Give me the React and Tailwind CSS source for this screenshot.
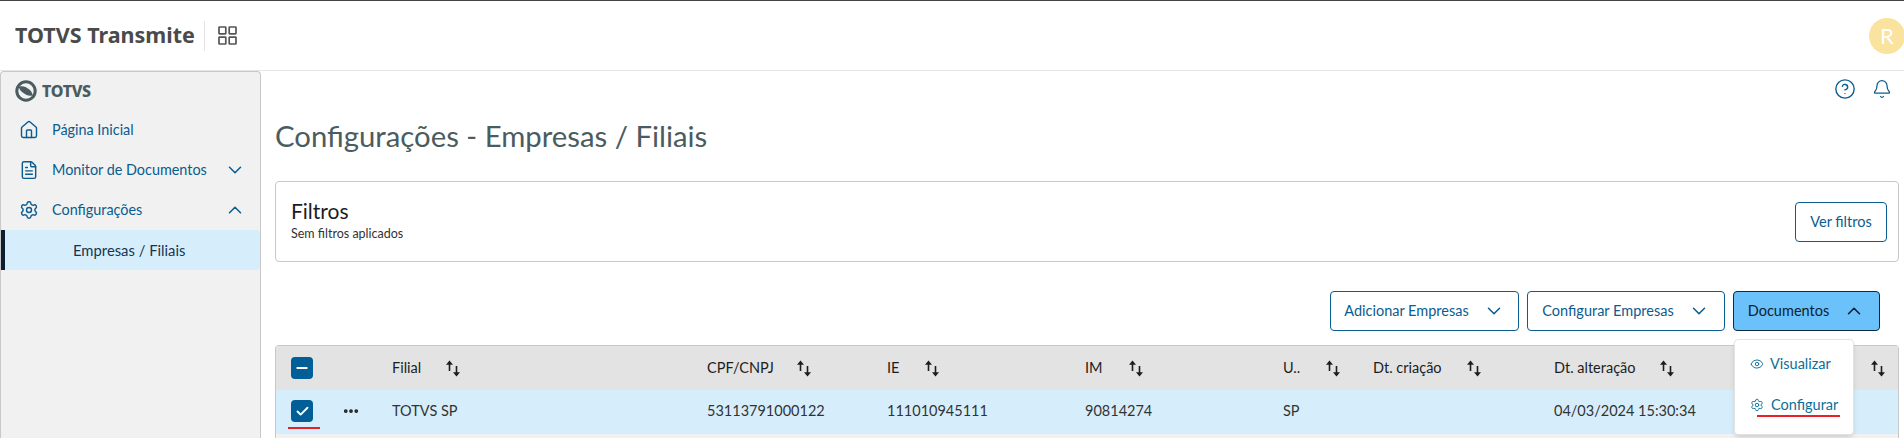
import React from "react";
import {
  Bell,
  Check,
  ChevronDown,
  ChevronUp,
  CircleHelp,
  Ellipsis,
  Eye,
  FileText,
  House,
  Minus,
  Settings,
} from "lucide-react";

const SortIcon = () => (
  <svg width="16" height="17" viewBox="0 0 16 17" fill="none" className="shrink-0">
    <path d="M4.5 11V3" stroke="#1d1d1d" strokeWidth="1.6" />
    <path d="M4.5 0.5 8 4.7H1Z" fill="#1d1d1d" />
    <path d="M11.5 6v8" stroke="#1d1d1d" strokeWidth="1.6" />
    <path d="M11.5 16.5 8 12.3h7Z" fill="#1d1d1d" />
  </svg>
);

const GridIcon = () => (
  <svg width="19" height="19" viewBox="0 0 19 19" fill="none" stroke="#555555" strokeWidth="1.7" className="shrink-0">
    <rect x="1" y="1" width="6.8" height="6.8" rx="0.6" />
    <rect x="11.2" y="1" width="6.8" height="6.8" rx="0.6" />
    <rect x="1" y="11.2" width="6.8" height="6.8" rx="0.6" />
    <rect x="11.2" y="11.2" width="6.8" height="6.8" rx="0.6" />
  </svg>
);

const TotvsLogo = () => (
  <svg width="22" height="22" viewBox="0 0 22 22" className="shrink-0">
    <circle cx="11" cy="11" r="9.2" fill="none" stroke="#4a5c60" strokeWidth="3" />
    <path d="M3.5 6.5 Q8 5.8 11 7.2 L15 10 Q17 12 18 15.5 Q14 16 11 14.8 L7 12 Q4.5 10 3.5 6.5Z" fill="#4a5c60" />
  </svg>
);

const SideItem = ({ icon: Icon, label, chevron: Chevron }) => (
  <div className="h-10 flex items-center pl-[18px] pr-[14px] text-[#0b5c8f]">
    <Icon size={20} strokeWidth={1.7} className="shrink-0" />
    <span className="ml-[13px] text-[14.4px]">{label}</span>
    {Chevron && <Chevron size={22} strokeWidth={1.7} className="ml-auto" />}
  </div>
);

const DropButton = ({ label, width, open }) => (
  <button
    className={`h-[40px] ${width} flex items-center justify-center gap-[14px] rounded-[4px] border text-[14.5px] ${
      open
        ? "bg-[#6bc1f9] border-[#0b2a42] text-[#0b1f33]"
        : "bg-white border-[#0b5c8f] text-[#0b5c8f]"
    }`}
  >
    {label}
    {open ? <ChevronUp size={22} strokeWidth={1.7} /> : <ChevronDown size={22} strokeWidth={1.7} />}
  </button>
);

const HeadCell = ({ label, gap }) => (
  <div className={`flex items-center ${gap} text-[14.5px] text-[#1d1d1d]`}>
    <span>{label}</span>
    <SortIcon />
  </div>
);

const tableCols = "grid grid-cols-[116px_315px_180px_198px_198px_90px_181px_1fr] items-center";

export default function App() {
  return (
    <div className="relative w-[1904px] h-[438px] overflow-hidden bg-white font-['Lato',sans-serif] border-t border-[#444444]">
      <header className="h-[70px] flex items-center border-b border-[#e6e6e6] pl-[15px]">
        <span className="font-['Noto_Sans',sans-serif] font-bold text-[21.5px] text-[#4a4a4a]">TOTVS Transmite</span>
        <div className="ml-[9px] h-[30px] w-px bg-[#e3e3e3]" />
        <div className="ml-[13px]">
          <GridIcon />
        </div>
        <div className="ml-auto mr-[-1px] w-9 h-9 rounded-full bg-[#fae29f] flex items-center justify-center text-white text-[22px]">
          R
        </div>
      </header>

      <div className="flex h-[367px]">
        <aside className="w-[261px] shrink-0 bg-[#f1f1f1] border border-b-0 border-[#c8c8c8] rounded-t-[4px]">
          <div className="h-[38px] flex items-center pl-[14px] gap-[5px]">
            <TotvsLogo />
            <span className="font-['Noto_Sans',sans-serif] font-extrabold text-[16px] tracking-[-0.3px] text-[#4a5c60]">TOTVS</span>
          </div>
          <SideItem icon={House} label="Página Inicial" />
          <SideItem icon={FileText} label="Monitor de Documentos" chevron={ChevronDown} />
          <SideItem icon={Settings} label="Configurações" chevron={ChevronUp} />
          <div className="h-10 flex items-center pl-[68px] bg-[#d6eefb] border-l-4 border-[#0b1f33] rounded-r-[4px] text-[14.8px] text-[#16344f]">
            Empresas / Filiais
          </div>
        </aside>

        <main className="flex-1 pl-[14px] pr-[5px]">
          <div className="h-[36px] flex items-center justify-end gap-[16px] pr-[7px] text-[#0b5c8f]">
            <CircleHelp size={22} strokeWidth={1.5} />
            <Bell size={20} strokeWidth={1.5} />
          </div>
          <h1 className="mt-[8px] h-[42px] text-[29.3px] leading-[42px] font-normal text-[#4a5c60]">
            Configurações - Empresas / Filiais
          </h1>
          <section className="mt-[24px] h-[81px] flex items-center justify-between border border-[#c8c8c8] rounded-[4px] pl-[15px] pr-[11px]">
            <div className="-mt-[1px]">
              <div className="text-[21px] leading-[24px] -mt-[1px] mb-[3px] text-[#1d1d1d]">Filtros</div>
              <div className="text-[12.5px] leading-[16px] text-[#333333]">Sem filtros aplicados</div>
            </div>
            <button className="h-10 w-[92px] rounded-[4px] border border-[#0b5c8f] text-[14.5px] text-[#0b5c8f]">
              Ver filtros
            </button>
          </section>

          <div className="mt-[29px] flex justify-end gap-[8px] pr-[19px]">
            <DropButton label="Adicionar Empresas" width="w-[189px]" />
            <DropButton label="Configurar Empresas" width="w-[198px]" />
            <DropButton label="Documentos" width="w-[147px]" open />
          </div>

          <div className="mt-[14px] border border-[#c8c8c8] border-b-0 rounded-t-[4px]">
            <div className={`${tableCols} h-[44px] bg-[#e3e3e3]`}>
              <div className="pl-[15px]">
                <div className="w-[22px] h-[22px] rounded-[4px] bg-[#025e96] flex items-center justify-center text-white">
                  <Minus size={16} strokeWidth={3} />
                </div>
              </div>
              <HeadCell label="Filial" gap="gap-[24px]" />
              <HeadCell label="CPF/CNPJ" gap="gap-[22px]" />
              <HeadCell label="IE" gap="gap-[25px]" />
              <HeadCell label="IM" gap="gap-[25px]" />
              <HeadCell label="U.." gap="gap-[25px]" />
              <HeadCell label="Dt. criação" gap="gap-[24px]" />
              <HeadCell label="Dt. alteração" gap="gap-[23px]" />
            </div>
            <div className={`${tableCols} h-[44px] pb-[2px] bg-[#d6eefb] text-[14.5px] text-[#333333]`}>
              <div className="pl-[15px] flex items-center">
                <div className="w-[22px] h-[22px] rounded-[4px] bg-[#025e96] flex items-center justify-center text-white">
                  <Check size={15} strokeWidth={3} />
                </div>
                <Ellipsis size={18} strokeWidth={3} className="ml-[29px] text-[#1d1d1d]" />
              </div>
              <div>TOTVS SP</div>
              <div>53113791000122</div>
              <div>111010945111</div>
              <div>90814274</div>
              <div>SP</div>
              <div />
              <div>04/03/2024 15:30:34</div>
            </div>
            <div className="h-[10px] bg-[#f1f1f1]" />
          </div>
        </main>
      </div>

      {/* sort icon of the last column, behind the menu */}
      <div className="absolute left-[1870px] top-[359px]">
        <SortIcon />
      </div>

      {/* Documentos menu */}
      <div className="absolute left-[1734px] top-[338px] w-[120px] h-[96px] bg-white rounded-[4px] border border-[#e3e3e3] shadow-md text-[14.5px] text-[#0b7097]">
        <div className="h-12 flex items-center pl-[15px] gap-[6px]">
          <Eye size={14} strokeWidth={1.6} />
          Visualizar
        </div>
        <div className="h-[34px] flex items-center pl-[15px] gap-[7px]">
          <Settings size={14} strokeWidth={1.6} />
          Configurar
        </div>
      </div>

      {/* red annotations */}
      <div className="absolute left-[288px] top-[426px] w-[32px] h-[2px] bg-[#e8202a]" />
      <div className="absolute left-[1757px] top-[414px] w-[83px] h-[2px] bg-[#e8202a]" />
    </div>
  );
}
